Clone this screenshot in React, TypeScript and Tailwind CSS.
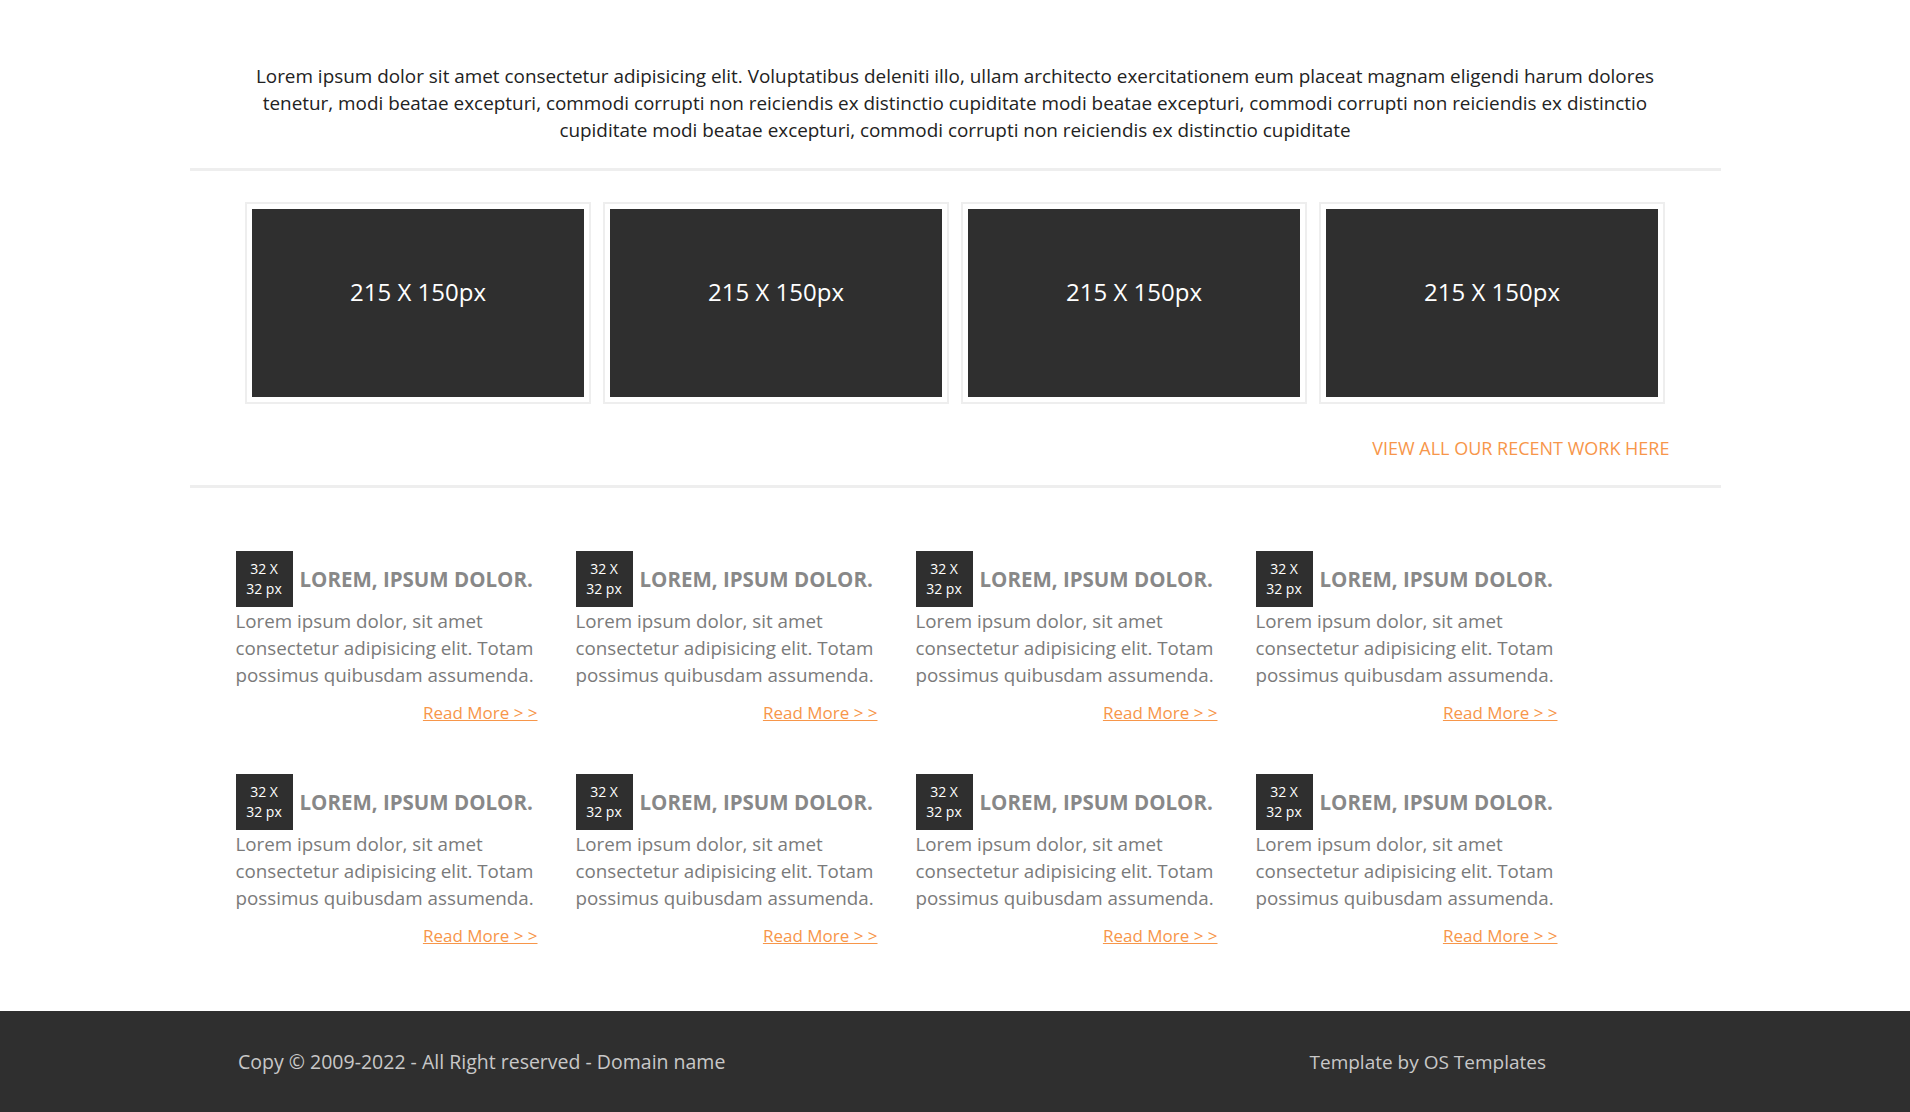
import React from "react";

const font = { fontFamily: '"Open Sans", "Noto Sans", sans-serif' };

const intro =
  "Lorem ipsum dolor sit amet consectetur adipisicing elit. Voluptatibus deleniti illo, ullam architecto exercitationem eum placeat magnam eligendi harum dolores tenetur, modi beatae excepturi, commodi corrupti non reiciendis ex distinctio cupiditate modi beatae excepturi, commodi corrupti non reiciendis ex distinctio cupiditate modi beatae excepturi, commodi corrupti non reiciendis ex distinctio cupiditate";

const Feature: React.FC = () => {
  return (
    <div className="flex flex-col">
      <div className="flex items-center gap-[7px]">
        <div className="w-[57px] h-[56px] bg-[#2f2f2f] text-white text-[14px] leading-[20px] flex flex-col items-center justify-center">
          <span>32 X</span>
          <span>32 px</span>
        </div>
        <h3 className="font-bold text-[20.5px] text-[#888888]">LOREM, IPSUM DOLOR.</h3>
      </div>
      <p className="text-[18.8px] leading-[27px] text-[#7a7a7a] mt-[1px]">
        Lorem ipsum dolor, sit amet consectetur adipisicing elit. Totam possimus quibusdam assumenda.
      </p>
      <div className="flex justify-end mt-[10px]">
        <a href="#" className="text-[17px] leading-[27px] text-[#f7964a] underline">
          Read More &gt; &gt;
        </a>
      </div>
    </div>
  );
};

export default function App() {
  return (
    <div className="bg-white min-h-screen" style={font}>
      <div className="w-[1531px] mx-auto">
        <div className="pt-[63px] pb-[24px] flex justify-center">
          <p className="w-[1420px] text-center text-[18.9px] leading-[27px] text-[#222]">{intro}</p>
        </div>
        <div className="h-[3px] bg-[#eeeeee]" />

        <div className="flex justify-center gap-[12px] mt-[31px]">
          {[0, 1, 2, 3].map((i) => (
            <div key={i} className="border-2 border-[#eeeeee] p-[5px]">
              <div className="w-[332px] h-[188px] bg-[#2f2f2f] flex items-center justify-center pb-[22px] text-white text-[24px]">
                215 X 150px
              </div>
            </div>
          ))}
        </div>

        <div className="flex justify-end pr-[51px] mt-[31px] h-[27px] items-center">
          <a href="#" className="text-[18px] text-[#f7964a]">
            VIEW ALL OUR RECENT WORK HERE
          </a>
        </div>
        <div className="h-[3px] bg-[#eeeeee] mt-[23px]" />

        <div className="pl-[46px] pt-[63px] pb-[62px] grid grid-cols-[302px_302px_302px_302px] gap-x-[38px] gap-y-[48px]">
          {[0, 1, 2, 3, 4, 5, 6, 7].map((i) => (
            <Feature key={i} />
          ))}
        </div>
      </div>

      <footer className="bg-[#2f2f2f] h-[102px] flex items-center">
        <div className="ml-[238px] w-[1308px] flex justify-between items-center text-[#c8c8c8]">
          <span className="text-[19.5px]">Copy © 2009-2022 - All Right reserved - Domain name</span>
          <span className="text-[19px]">Template by OS Templates</span>
        </div>
      </footer>
    </div>
  );
}
